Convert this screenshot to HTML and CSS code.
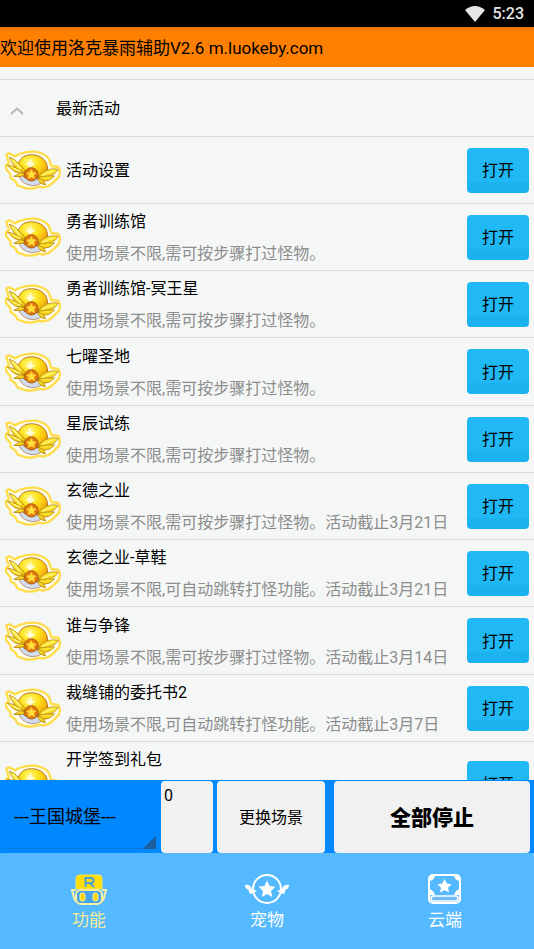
FILE: index.html
```html
<!DOCTYPE html>
<html lang="zh-CN">
<head>
    <meta charset="UTF-8">
    <meta name="viewport" content="width=device-width, initial-scale=1.0">
    <title>洛克暴雨辅助</title>
    <link rel="stylesheet" href="styles.css">
</head>
<body>
    <!-- Shared winged hat icon -->
    <svg class="defs" width="0" height="0" aria-hidden="true">
        <defs>
            <radialGradient id="gold" cx="0.4" cy="0.3" r="0.75">
                <stop offset="0" stop-color="#fff98a"/>
                <stop offset="0.4" stop-color="#ffe21c"/>
                <stop offset="0.75" stop-color="#f8b810"/>
                <stop offset="1" stop-color="#c0780c"/>
            </radialGradient>
            <linearGradient id="feather" x1="0" y1="0" x2="0" y2="1">
                <stop offset="0" stop-color="#fff33a"/>
                <stop offset="1" stop-color="#f0c008"/>
            </linearGradient>
            <symbol id="hat" viewBox="15 30 168 120">
                <path d="M19 44 L28 40 L44 49 L58 42 Q82 34 105 35 Q134 39 147 57 L154 78 L175 81 L180 92 L177 110 L160 127 L146 138 L128 143 L118 140 Q98 149 74 144 L52 136 L46 124 L32 114 L31 102 L18 87 L18 75 L27 70 Z" fill="#fffdf0" stroke="#ffdc48" stroke-width="7" stroke-linejoin="round"/>
                <path d="M55 102 Q62 134 97 137 Q124 136 133 118 L122 106 Z" fill="#d0dcf0" stroke="#a8653c" stroke-width="2"/>
                <path d="M54 90 Q50 65 70 50 Q94 38 121 50 Q146 65 142 92 Q136 111 120 115 Q95 122 72 112 Z" fill="url(#gold)" stroke="#a8641c" stroke-width="2.5"/>
                <path d="M91 55 L95 67 L106 72 L95 77 L91 89 L86 77 L76 72 L86 67 Z" fill="#fffdd8"/>
                <g fill="url(#feather)" stroke="#b07c14" stroke-width="2.2" stroke-linejoin="round">
                    <path d="M78 101 Q60 101 44 95 Q31 86 22 75 Q38 77 52 85 Z"/>
                    <path d="M76 99 Q56 93 44 80 Q33 65 28 51 Q45 57 57 72 Q69 81 74 90 Z"/>
                    <path d="M77 104 Q61 114 41 109 Q52 104 62 98 Z"/>
                    <path d="M116 110 Q122 97 138 91 Q158 83 175 88 Q165 105 142 111 Q126 117 116 110 Z"/>
                    <path d="M116 112 Q138 107 164 108 Q151 123 134 124 Q120 122 116 112 Z"/>
                    <path d="M115 115 Q129 117 137 134 Q122 134 115 122 Z"/>
                </g>
                <path d="M37 60 L62 86 M126 106 L160 93 M41 85 L62 95" stroke="#fff98a" stroke-width="4" fill="none"/>
                <circle cx="94" cy="103" r="20" fill="#e07a12" stroke="#a04c0a" stroke-width="2.5"/>
                <path d="M94 88 L99 97 L109 99 L102 106 L104 116 L94 112 L84 116 L86 106 L79 99 L89 97 Z" fill="#ffe13a" stroke="#ffb52a" stroke-width="2"/>
            </symbol>
        </defs>
    </svg>

    <div class="status-bar">
        <svg class="wifi" viewBox="0 0 20 16" aria-hidden="true"><path d="M0 4 Q10 -4 20 4 L10 16 Z" fill="#e6e6e6"/></svg>
        <span>5:23</span>
    </div>
    <header class="title-bar">欢迎使用洛克暴雨辅助V2.6 m.luokeby.com</header>

    <main class="content">
        <button class="group-header" type="button">
            <svg class="chevron" viewBox="0 0 14 8" aria-hidden="true"><path d="M1 7 L7 1.5 L13 7" fill="none" stroke="#b5b6b6" stroke-width="2"/></svg>
            <span>最新活动</span>
        </button>
        <ul class="list">
            <li class="row">
                <svg class="hat"><use href="#hat"/></svg>
                <div class="info"><div class="name">活动设置</div></div>
                <button class="open" type="button">打开</button>
            </li>
            <li class="row">
                <svg class="hat"><use href="#hat"/></svg>
                <div class="info"><div class="name">勇者训练馆</div><div class="desc">使用场景不限,需可按步骤打过怪物。</div></div>
                <button class="open" type="button">打开</button>
            </li>
            <li class="row">
                <svg class="hat"><use href="#hat"/></svg>
                <div class="info"><div class="name">勇者训练馆-冥王星</div><div class="desc">使用场景不限,需可按步骤打过怪物。</div></div>
                <button class="open" type="button">打开</button>
            </li>
            <li class="row">
                <svg class="hat"><use href="#hat"/></svg>
                <div class="info"><div class="name">七曜圣地</div><div class="desc">使用场景不限,需可按步骤打过怪物。</div></div>
                <button class="open" type="button">打开</button>
            </li>
            <li class="row">
                <svg class="hat"><use href="#hat"/></svg>
                <div class="info"><div class="name">星辰试练</div><div class="desc">使用场景不限,需可按步骤打过怪物。</div></div>
                <button class="open" type="button">打开</button>
            </li>
            <li class="row">
                <svg class="hat"><use href="#hat"/></svg>
                <div class="info"><div class="name">玄德之业</div><div class="desc">使用场景不限,需可按步骤打过怪物。活动截止3月21日</div></div>
                <button class="open" type="button">打开</button>
            </li>
            <li class="row">
                <svg class="hat"><use href="#hat"/></svg>
                <div class="info"><div class="name">玄德之业-草鞋</div><div class="desc">使用场景不限,可自动跳转打怪功能。活动截止3月21日</div></div>
                <button class="open" type="button">打开</button>
            </li>
            <li class="row">
                <svg class="hat"><use href="#hat"/></svg>
                <div class="info"><div class="name">谁与争锋</div><div class="desc">使用场景不限,需可按步骤打过怪物。活动截止3月14日</div></div>
                <button class="open" type="button">打开</button>
            </li>
            <li class="row">
                <svg class="hat"><use href="#hat"/></svg>
                <div class="info"><div class="name">裁缝铺的委托书2</div><div class="desc">使用场景不限,可自动跳转打怪功能。活动截止3月7日</div></div>
                <button class="open" type="button">打开</button>
            </li>
            <li class="row tall">
                <svg class="hat"><use href="#hat"/></svg>
                <div class="info"><div class="name">开学签到礼包</div></div>
                <button class="open" type="button">打开</button>
            </li>
        </ul>
    </main>

    <div class="controls">
        <div class="spinner">
            <select aria-label="场景">
                <option>---王国城堡---</option>
            </select>
        </div>
        <textarea class="count" aria-label="数量">0</textarea>
        <button class="change" type="button">更换场景</button>
        <button class="stop" type="button">全部停止</button>
    </div>

    <nav class="tabs">
        <a href="#" class="tab active">
            <svg class="tab-icon" viewBox="0 0 44 34" aria-hidden="true">
                <path d="M9 17 H5 L7 25 Q8 29 12 29 M35 17 H39 L37 25 Q36 29 32 29" fill="none" stroke="#f3efaa" stroke-width="2"/>
                <path d="M9 16 V5 Q9 2 13 2 H31 Q35 2 35 5 V16 Z" fill="#ffdc0a" stroke="#f8e85a"/>
                <path d="M18.5 14 V5 H23.5 Q26.5 5 26.5 7.5 Q26.5 10 23.5 10 H18.5 M23 10 L27 14" fill="none" stroke="#4a9fd8" stroke-width="2"/>
                <rect x="9" y="17" width="26" height="14" rx="5" fill="#4aa2ea" stroke="#f6efa0" stroke-width="2"/>
                <rect x="13" y="20" width="5" height="8" rx="2" fill="#ffd400" stroke="#f6efa0"/>
                <rect x="26" y="20" width="5" height="8" rx="2" fill="#ffd400" stroke="#f6efa0"/>
            </svg>
            <span>功能</span>
        </a>
        <a href="#" class="tab">
            <svg class="tab-icon" viewBox="0 0 44 34" aria-hidden="true">
                <circle cx="22" cy="16" r="14" fill="none" stroke="#fff" stroke-width="2"/>
                <path d="M22 7.5 L24.5 13 L30.5 13.8 L26 18 L27.2 24 L22 21 L16.8 24 L18 18 L13.5 13.8 L19.5 13 Z" fill="#fff"/>
                <path d="M0 12 Q5 11 7 16 L12 18 L6 21 Q3 20 4 17 Q0 16 0 12 Z M44 12 Q39 11 37 16 L32 18 L38 21 Q41 20 40 17 Q44 16 44 12 Z" fill="#fff"/>
            </svg>
            <span>宠物</span>
        </a>
        <a href="#" class="tab">
            <svg class="tab-icon" viewBox="0 0 44 34" aria-hidden="true">
                <rect x="6" y="2" width="31" height="28" rx="4" fill="none" stroke="#fff" stroke-width="2"/>
                <path d="M7 3 H12 Q11 7 7 8 Z M36 3 H31 Q32 7 36 8 Z M7 22 V16 Q11 18 12 22 Z M36 22 V16 Q32 18 31 22 Z" fill="#fff"/>
                <rect x="8" y="23" width="27" height="5" rx="2.5" fill="#6dbcf5" stroke="#fff" stroke-width="1.5"/>
                <path d="M21.5 6 L23.8 10.5 L28.5 11.2 L25 14.7 L26 19.5 L21.5 17.3 L17 19.5 L18 14.7 L14.5 11.2 L19.2 10.5 Z" fill="#fff"/>
            </svg>
            <span>云端</span>
        </a>
    </nav>
</body>
</html>
```
FILE: styles.css
```css
* {
    box-sizing: border-box;
}
body {
    display: flex;
    flex-direction: column;
    height: 100vh;
    margin: 0;
    background: #f5f7f6;
    color: #000;
    font-family: Roboto, "Noto Sans CJK SC", sans-serif;
    font-size: 16px;
    line-height: 24px;
}
button, select, textarea {
    margin: 0;
    border: none;
    color: inherit;
    font: inherit;
}
button {
    padding: 2px 0 0;
    cursor: pointer;
}
.defs {
    position: absolute;
}

/* Top bars */
.status-bar {
    display: flex;
    flex: none;
    align-items: center;
    justify-content: flex-end;
    gap: 8px;
    height: 27px;
    padding-right: 10px;
    background: #000;
    color: #e6e6e6;
    font-weight: 500;
}
.wifi {
    width: 20px;
    height: 16px;
}
.title-bar {
    flex: none;
    height: 40px;
    background: linear-gradient(#e87400, #ff8000 4px);
    font-size: 17px;
    line-height: 42px;
    white-space: nowrap;
}

/* Activity list */
.content {
    flex: 1;
    min-height: 0;
    padding-top: 12px;
    overflow: hidden;
}
.group-header {
    display: flex;
    align-items: center;
    gap: 32px;
    width: 100%;
    height: 57px;
    padding: 2px 0 0 10px;
    border-top: 1px solid #d9dbda;
    background: none;
}
.chevron {
    width: 14px;
    height: 8px;
    margin-top: 3px;
}
.list {
    margin: 0;
    padding: 0;
    list-style: none;
}
.row {
    display: flex;
    align-items: center;
    gap: 5px;
    height: 67px;
    padding: 0 5px;
    border-top: 1px solid #d9dbda;
}
.row:nth-child(4n) {
    height: 68px;
}
.hat {
    flex: none;
    width: 56px;
    height: 40px;
}
.info {
    display: flex;
    flex: 1;
    flex-direction: column;
    gap: 8px;
    min-width: 0;
    padding-top: 2px;
    white-space: nowrap;
}
.desc {
    color: #8c8d8d;
}
.open {
    flex: none;
    width: 62px;
    height: 45px;
    border-radius: 4px;
    background: linear-gradient(#20b9f5 75%, #1bb3ef 75%);
}
.tall {
    height: 84px;
}
.tall .info {
    align-self: flex-start;
    padding-top: 6px;
}

/* Scene controls */
.controls {
    display: grid;
    flex: none;
    grid-template-columns: 161fr 56fr 117fr 196fr;
    height: 73px;
    padding: 1px 4px 0 0;
    background: #0088ff;
}
.controls button, .count {
    border-radius: 4px;
    background: #f1f1f1;
}
.spinner {
    position: relative;
    margin-right: 4px;
}
.spinner select {
    width: 100%;
    height: 100%;
    padding: 0 14px;
    appearance: none;
    background: none;
    font-size: 18px;
}
.spinner::before {
    content: "";
    position: absolute;
    right: 1px;
    bottom: 4px;
    left: 5px;
    height: 1px;
    background: #0878dc;
}
.spinner::after {
    content: "";
    position: absolute;
    right: 1px;
    bottom: 4px;
    width: 13px;
    height: 13px;
    background: linear-gradient(135deg, transparent 50%, #1c5f9e 50%);
    pointer-events: none;
}
.count {
    min-width: 0;
    margin-right: 4px;
    padding: 3px;
    resize: none;
}
.change {
    margin-right: 9px;
}
.stop {
    font-size: 21px;
    font-weight: 900;
}

/* Bottom tabs */
.tabs {
    display: flex;
    flex: none;
    height: 96px;
    background: #55b9ff;
}
.tab {
    display: flex;
    flex: 1;
    flex-direction: column;
    align-items: center;
    padding-top: 20px;
    color: #fff;
    font-size: 17px;
    text-decoration: none;
}
.tab-icon {
    width: 44px;
    height: 34px;
    margin-bottom: 1px;
}
.tab.active {
    color: #f4ec9c;
}
```
